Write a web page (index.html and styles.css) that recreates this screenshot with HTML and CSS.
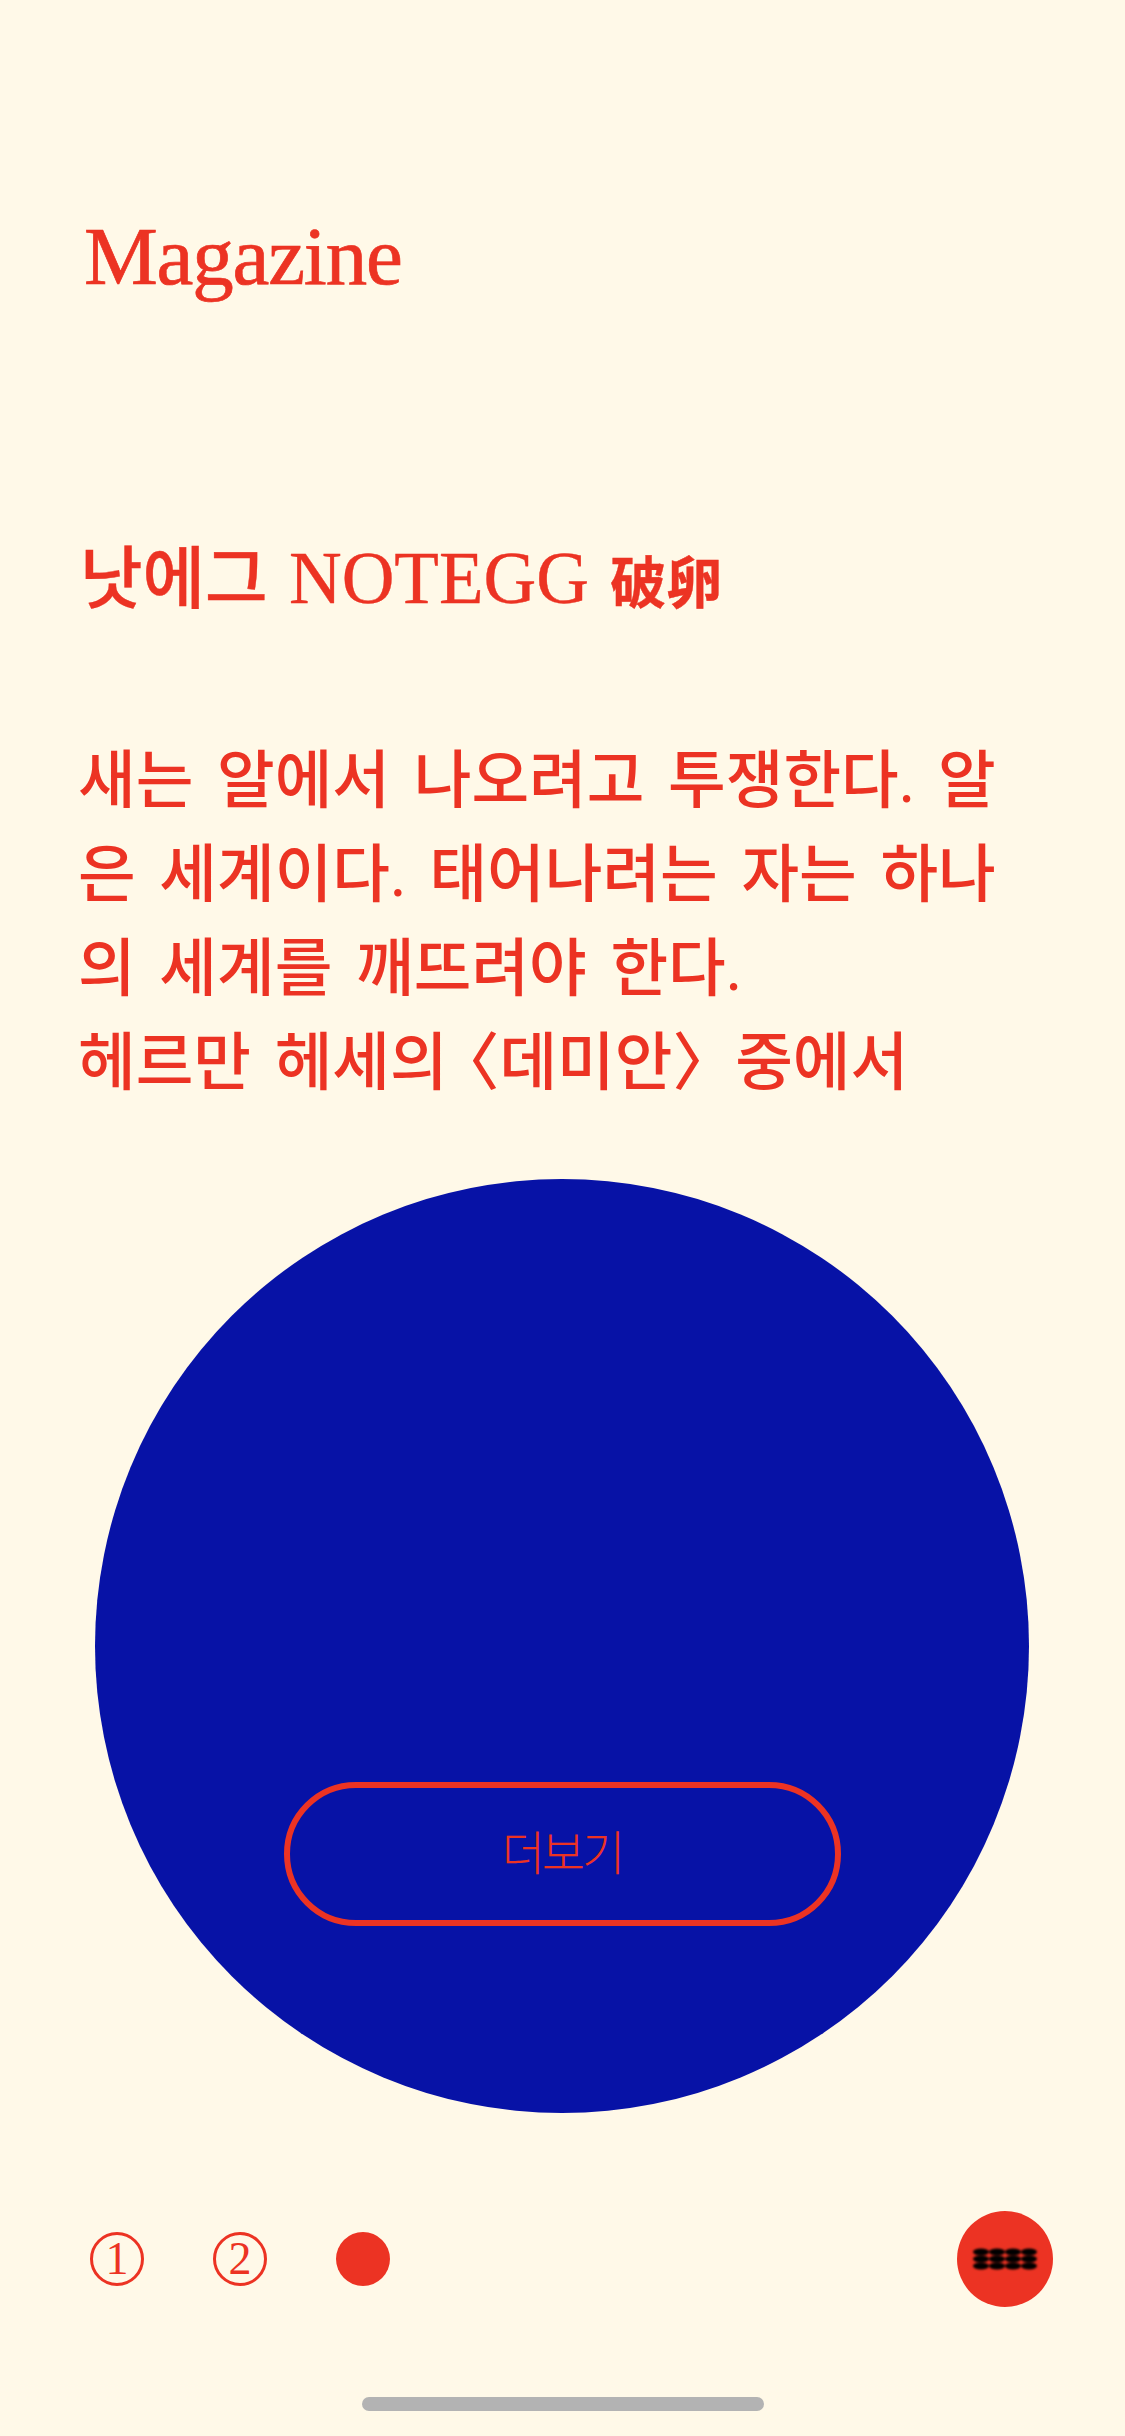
FILE: index.html
```html
<!DOCTYPE html>
<html lang="ko">
<head>
<meta charset="utf-8">
<title>Magazine</title>
<link rel="stylesheet" href="styles.css">
</head>
<body>
<main class="page">
  <h1 class="brand">Magazine</h1>
  <h2 class="title"><span class="hangul">낫에그</span> NOTEGG <span class="hanja">破卵</span></h2>
  <p class="quote">새는 알에서 나오려고 투쟁한다. 알<br>은 세계이다. 태어나려는 자는 하나<br>의 세계를 깨뜨려야 한다.<br>헤르만 헤세<span class="tight">의</span>〈데미안〉중에서</p>
  <section class="disc">
    <a class="more" href="#">더보기</a>
  </section>
  <footer class="bar">
    <nav class="pager">
      <a class="page-num" href="#">1</a>
      <a class="page-num" href="#">2</a>
      <span class="page-dot"></span>
    </nav>
    <button class="menu" aria-label="메뉴">
      <svg class="menu-icon" viewBox="0 0 64 22" width="64" height="22">
        <g fill="#000">
          <ellipse cx="8" cy="4" rx="8" ry="3.4"/><ellipse cx="24" cy="4" rx="8" ry="3.4"/><ellipse cx="40" cy="4" rx="8" ry="3.4"/><ellipse cx="56" cy="4" rx="8" ry="3.4"/>
          <ellipse cx="8" cy="11" rx="8" ry="3.4"/><ellipse cx="24" cy="11" rx="8" ry="3.4"/><ellipse cx="40" cy="11" rx="8" ry="3.4"/><ellipse cx="56" cy="11" rx="8" ry="3.4"/>
          <ellipse cx="8" cy="18" rx="8" ry="3.4"/><ellipse cx="24" cy="18" rx="8" ry="3.4"/><ellipse cx="40" cy="18" rx="8" ry="3.4"/><ellipse cx="56" cy="18" rx="8" ry="3.4"/>
        </g>
      </svg>
    </button>
  </footer>
  <div class="home-indicator"></div>
</main>
</body>
</html>
```
FILE: styles.css
```css
* { box-sizing: border-box; }
html, body { margin: 0; padding: 0; }
body {
  width: 1125px;
  height: 2436px;
  overflow: hidden;
  background: #fff9e8;
  color: #ec3323;
  font-family: "Liberation Serif", "Noto Sans CJK KR", serif;
}
.page {
  display: flex;
  flex-direction: column;
  height: 2436px;
}
.brand {
  margin: 208px 0 0 84px;
  font-size: 83px;
  font-weight: 400;
  line-height: 96px;
  letter-spacing: -1.2px;
  -webkit-text-stroke: 0.7px #ec3323;
}
.title {
  margin: 228px 0 0 80px;
  font-size: 73px;
  font-weight: 400;
  line-height: 84px;
  word-spacing: 3px;
  white-space: nowrap;
  -webkit-text-stroke: 0.4px #ec3323;
}
.hangul {
  font-family: "Noto Sans CJK KR", sans-serif;
  font-size: 68px;
  font-weight: 500;
}
.hanja {
  font-family: "Noto Sans CJK KR", sans-serif;
  font-size: 56px;
  font-weight: 700;
}
.quote {
  margin: 113px 0 0 78px;
  font-size: 62.7px;
  font-weight: 500;
  line-height: 94px;
  word-spacing: 8px;
  white-space: nowrap;
}
.tight { letter-spacing: -11px; }
.disc {
  display: flex;
  flex-direction: column;
  justify-content: flex-end;
  align-items: center;
  flex: none;
  width: 934px;
  height: 934px;
  margin: 69px 0 0 95px;
  padding-bottom: 187px;
  border-radius: 50%;
  background: #0712a6;
}
.more {
  display: flex;
  align-items: center;
  justify-content: center;
  width: 557px;
  height: 144px;
  padding-bottom: 10px;
  border: 6px solid #ec3323;
  border-radius: 72px;
  color: #ec3323;
  font-family: "Noto Sans CJK KR", sans-serif;
  font-size: 47px;
  font-weight: 300;
  letter-spacing: -3px;
  text-decoration: none;
}
.bar {
  display: flex;
  align-items: center;
  justify-content: space-between;
  margin: 98px 72px 0 90px;
}
.pager {
  display: flex;
  align-items: center;
  gap: 69px;
}
.page-num {
  display: flex;
  align-items: center;
  justify-content: center;
  width: 54px;
  height: 54px;
  border: 3px solid #ec3323;
  border-radius: 50%;
  color: #ec3323;
  font-size: 46px;
  line-height: 1;
  text-decoration: none;
}
.page-dot {
  width: 54px;
  height: 54px;
  border-radius: 50%;
  background: #ec3323;
}
.menu {
  display: flex;
  align-items: center;
  justify-content: center;
  width: 96px;
  height: 96px;
  padding: 0;
  border: 0;
  border-radius: 50%;
  background: #ec3323;
}
.menu-icon { filter: blur(0.9px); }
.home-indicator {
  align-self: center;
  width: 402px;
  height: 14px;
  margin-top: 90px;
  border-radius: 7px;
  background: #b3b3b3;
}
```
